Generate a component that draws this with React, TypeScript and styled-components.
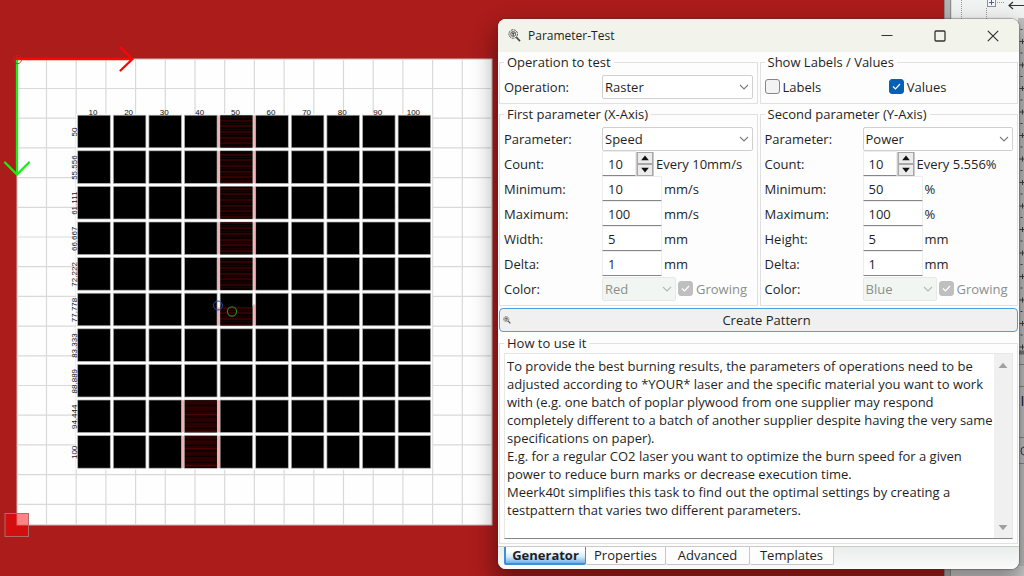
import React from "react";
import styled, { createGlobalStyle, css } from "styled-components";

const GlobalStyle = createGlobalStyle`
  *, *::before, *::after { box-sizing: border-box; }
  body { margin: 0; font-family: "Open Sans", "Noto Sans", sans-serif; font-size: 13px; line-height: 18px; color: #1f1f1f; overflow: hidden; }
  button, input, select, textarea { font: inherit; color: inherit; margin: 0; }
`;

/* ---------- desktop ---------- */

const Desktop = styled.div`
  position: relative;
  display: flex;
  min-height: 100vh;
  overflow: hidden;
  background: #ab1c1b;
`;

const Scene = styled.main`
  flex: 1;
  min-width: 0;
`;

const SceneDrawing = styled.svg`
  display: block;
`;

const Sash = styled.div`
  width: 8px;
  background: linear-gradient(90deg, #8a8a8a 0 1px, #b4b4b4 1px 6px, #8f8f8f 6px 7px, #dcdcdc 7px);
`;

const SidePanel = styled.aside`
  width: 72px;
  background: #f1f2f2;
`;

/* ---------- tool window ---------- */

const ToolWindow = styled.section`
  position: absolute;
  top: 19px;
  left: 498px;
  right: 5px;
  display: flex;
  flex-direction: column;
  background: #fdfdfd;
  border-radius: 8px;
  box-shadow: 0 0 1px 1px rgba(70, 50, 50, 0.35), 0 12px 22px 4px rgba(0, 0, 0, 0.36);
  overflow: clip;
`;

const TitleBar = styled.header`
  display: flex;
  align-items: center;
  height: 33px;
  padding-left: 10px;
  background: #f2f3ea;
`;

const Title = styled.h1`
  flex: 1;
  margin: 0 0 0 7px;
  font-size: 12px;
  font-weight: 400;
`;

const CaptionButton = styled.button`
  display: grid;
  place-items: center;
  width: 53px;
  height: 33px;
  padding: 0;
  border: 0;
  background: none;
`;

const CaptionButtons = styled.div`
  display: flex;
`;

const Columns = styled.div`
  display: grid;
  grid-template-columns: 1fr 1fr;
  padding-top: 1px;
`;

const Group = styled.fieldset<{ $gap?: number; $top?: number }>`
  min-width: 0;
  margin: 0 1px ${(p) => p.$gap ?? 0}px;
  padding: ${(p) => p.$top ?? 3}px 4px 4px;
  border: 1px solid #e0e1e0;
`;

const Legend = styled.legend`
  padding: 0 3px;
  line-height: 18px;
`;

const FieldGrid = styled.div`
  display: grid;
  grid-template-columns: 98px 1fr;
  grid-auto-rows: 25px;
  align-items: center;
`;

const Inline = styled.div`
  display: flex;
  align-items: center;
  gap: 2px;
  height: 25px;
`;

const SelectFrame = styled.span<{ $width?: number; $off?: boolean }>`
  display: grid;
  grid-template-columns: 1fr 18px;
  align-items: center;
  width: ${(p) => (p.$width ? `${p.$width}px` : "100%")};
  svg { grid-area: 1 / 2; justify-self: center; pointer-events: none; }
  select {
    grid-area: 1 / 1 / 2 / 3;
    appearance: none;
    width: 100%;
    height: 24px;
    padding: 0 2px;
    border: 1px solid #cfd0cf;
    border-radius: 2px;
    background: #fff;
    ${(p) =>
      p.$off &&
      css`
        opacity: 1;
        color: #8b8f8c;
        background: #f2f6f3;
        border-color: #e6eae7;
      `}
  }
`;

const TextBox = styled.input<{ $width: number }>`
  width: ${(p) => p.$width}px;
  height: 25px;
  padding: 0 5px;
  border: 1px solid #ebeeec;
  border-bottom-color: #868686;
  border-radius: 1px;
  background: #fff;
`;

const SpinButtons = styled.span`
  display: grid;
  grid-template-rows: 12px 12px;
  width: 18px;
  background: #c9c9c9;
  padding: 0 1px;
`;

const SpinButton = styled.button`
  display: grid;
  place-items: center;
  padding: 0;
  border: 1px solid #a8a8a8;
  background: #ececec;
`;

const Spinner = styled.span`
  display: flex;
  align-items: center;
`;

const CheckLabel = styled.label<{ $off?: boolean }>`
  display: flex;
  align-items: center;
  gap: 3px;
  color: ${(p) => (p.$off ? "#8b8f8c" : "inherit")};
`;

const CheckFrame = styled.span`
  display: grid;
  place-items: center;
  width: 15px;
  height: 15px;
  > * { grid-area: 1 / 1; }
  svg { pointer-events: none; }
  input {
    appearance: none;
    width: 15px;
    height: 15px;
    border: 1px solid #868686;
    border-radius: 3px;
    background: #f3f3f3;
  }
  input:checked { background: #0560b6; border-color: #0560b6; }
  input:disabled { background: #bfbfbf; border-color: #bfbfbf; }
`;

const CheckRow = styled.div`
  display: grid;
  grid-template-columns: 1fr 1fr;
  align-items: center;
  height: 25px;
`;

const CreateButton = styled.button`
  display: grid;
  grid-template-columns: 16px 1fr;
  align-items: center;
  height: 24px;
  margin: 2px 1px;
  padding: 0 3px;
  border: 1px solid #4f9fdd;
  border-radius: 4px;
  background: #f0f0f0;
`;

const HelpFrame = styled.div`
  display: flex;
  height: 186px;
  border: 1px solid #e6e8e6;
  border-bottom-color: #868686;
`;

const HelpText = styled.textarea`
  flex: 1;
  min-width: 0;
  padding: 3px 0 3px 2px;
  border: 0;
  resize: none;
  overflow: hidden;
  white-space: pre;
  line-height: 18px;
  background: #fff;
`;

const ScrollTrack = styled.div`
  display: flex;
  flex-direction: column;
  justify-content: space-between;
  width: 18px;
  padding: 5px 0;
  background: #f0f0f0;
`;

const ScrollButton = styled.button`
  display: grid;
  place-items: center;
  height: 12px;
  padding: 0;
  border: 0;
  background: none;
`;

const TabBar = styled.nav`
  display: flex;
  height: 23px;
  padding: 0 6px 4px;
  border-top: 1px solid #c9c9c9;
  background: linear-gradient(#e9eeeb, #fafbfa);
`;

const Tab = styled.button<{ $width: number; $active?: boolean }>`
  width: ${(p) => p.$width}px;
  padding: 0 0 1px;
  line-height: 16px;
  border: 1px solid #c6c8c7;
  border-top: 0;
  border-left-width: ${(p) => (p.$active ? "2px" : "0")};
  border-radius: 0 0 2px 2px;
  background: #fdfdfd;
  ${(p) =>
    p.$active &&
    css`
      font-weight: 700;
      border-color: #3f8fd6;
      border-bottom-width: 2px;
      background: linear-gradient(#fff 20%, #d9eafa 60%, #6fb1ea);
    `}
`;

/* ---------- drawings ---------- */

const Chevron = ({ color = "#7d7d7d" }: { color?: string }) => (
  <svg width="10" height="6" viewBox="0 0 10 6" fill="none" stroke={color} strokeWidth="1.1">
    <path d="M1 1l4 4 4-4" />
  </svg>
);

const Magnifier = ({ size }: { size: number }) => (
  <svg width={size} height={size} viewBox="0 0 14 14" fill="none" stroke="#4a4a4a">
    <circle cx="5.6" cy="5.4" r="4.6" strokeWidth="1" strokeDasharray="2.4 .7" />
    <circle cx="5.6" cy="5.4" r="2.7" strokeWidth="0.9" />
    <path d="M4 4.400h3.200M5.600 4.400v3.200" strokeWidth="1.300" />
    <path d="M8.900 8.700l4 4.300" strokeWidth="1.800" />
  </svg>
);

const Triangle = ({ up, color = "#111", w = 8 }: { up?: boolean; color?: string; w?: number }) => (
  <svg width={w} height={w / 2 + 2} viewBox="0 0 8 6" fill={color}>
    <path d={up ? "M4 .6l3.800 4.600H.2z" : "M4 5.400L.2.8h7.600z"} />
  </svg>
);

const PITCH = 35.6;
const columnLabels = ["10", "20", "30", "40", "50", "60", "70", "80", "90", "100"];
const rowLabels = ["50", "55.556", "61.111", "66.667", "72.222", "77.778", "83.333", "88.889", "94.444", "100"];
const cells = rowLabels.flatMap((_, r) => columnLabels.map((__, c) => ({ c, r, x: 78 + c * PITCH, y: 115.5 + r * PITCH })));
const burned = cells.filter(({ c, r }) => (c === 4 && r <= 5) || (c === 3 && r >= 8));

const Workbench = () => (
  <SceneDrawing width="498" height="576" viewBox="0 0 498 576" fontFamily='"Liberation Sans", Arial, sans-serif' fontSize="8">
    <defs>
      <pattern id="burn" width="40" height="17" patternUnits="userSpaceOnUse">
        <rect width="40" height="17" fill="#0a0000" />
        <path d="M0 2h40M0 7h40M0 13h40" stroke="#3d0202" strokeWidth="1.500" />
        <path d="M0 4.500h40M0 10.500h40M0 15.500h40" stroke="#1e0000" strokeWidth="1" />
      </pattern>
      <pattern id="deepBurn" width="40" height="17" patternUnits="userSpaceOnUse">
        <rect width="40" height="17" fill="#2c0000" />
        <path d="M0 3.500h40M0 9h40M0 14.500h40" stroke="#0c0000" strokeWidth="1.500" />
        <path d="M0 6.500h40" stroke="#4a0303" strokeWidth="1" />
      </pattern>
    </defs>
    <rect x="17" y="59" width="475" height="466" fill="#fefefe" stroke="#c9b8b8" strokeWidth="1" />
    <g stroke="#d9d9d9" strokeWidth="1.200">
      {Array.from({ length: 15 }, (_, i) => (
        <path key={`v${i}`} d={`M${16.8 + (i + 1) * 29.7} 59.5V524.5`} />
      ))}
      {Array.from({ length: 15 }, (_, i) => (
        <path key={`h${i}`} d={`M17.5 ${58.8 + (i + 1) * 29.7}H491.5`} />
      ))}
    </g>
    <g fill="#fff">
      {cells.map(({ c, r, x, y }) => (
        <rect key={`${c}-${r}`} x={x - 1.8} y={y - 1.8} width="35.600" height="35.600" />
      ))}
    </g>
    <g stroke="#f3b3b6" strokeWidth="2.600">
      {burned.map(({ c, r, x, y }) => (
        <path key={`${c}-${r}`} d={`M${x - 1.8} ${r === 5 ? y + 14 : y}V${y + 32}M${x + 34} ${r === 5 ? y + 11 : y}V${y + 32}`} />
      ))}
    </g>
    <g fill="#000" stroke="#b4b4b4" strokeWidth="0.700">
      {cells.map(({ c, r, x, y }) => (
        <rect key={`${c}-${r}`} x={x - 0.3} y={y - 0.3} width="32.600" height="32.600" />
      ))}
    </g>
    {burned.map(({ c, r, x, y }) => (
      <rect
        key={`${c}-${r}`}
        x={x}
        y={r === 5 ? y + 13 : y}
        width="32"
        height={r === 5 ? 19 : 32}
        fill={c === 3 ? "url(#deepBurn)" : "url(#burn)"}
      />
    ))}
    <g fill="#111" textAnchor="middle">
      {columnLabels.map((t, i) => (
        <text key={t} x={93 + i * PITCH} y="115">{t}</text>
      ))}
      {rowLabels.map((t, i) => (
        <text key={t} transform={`translate(77 ${132 + i * PITCH}) rotate(-90)`}>{t}</text>
      ))}
    </g>
    <g fill="none" strokeLinecap="round">
      <path d="M17 59v115M5 162.500L17 174.500 29 162.500" stroke="#16f016" strokeWidth="2.300" />
      <path d="M17 59h115M120.500 47.500l12 11.500L120.500 70.500" stroke="#fd0505" strokeWidth="2.300" />
      <circle cx="17.500" cy="59.500" r="4.200" stroke="#e01818" strokeWidth="0.800" />
      <circle cx="218" cy="305.500" r="4.500" stroke="#2a48b8" strokeWidth="1" />
      <circle cx="232" cy="311.500" r="4.600" stroke="#1c8a1c" strokeWidth="1.200" />
    </g>
    <rect x="5" y="513.500" width="23.500" height="23" fill="#ff0000" fillOpacity="0.480" stroke="#b06a6a" strokeWidth="1" />
    <rect x="17.500" y="514" width="10.500" height="10.500" fill="#ff8484" />
  </SceneDrawing>
);

const PanelDrawing = () => (
  <svg width="72" height="576" viewBox="0 0 72 576" fill="none">
    <rect x="66" y="18" width="6" height="558" fill="#c2c2c2" />
    <rect y="566" width="72" height="10" fill="#d4d4d4" />
    <path d="M9.500 0v19M34.500 8v11" stroke="#999" strokeDasharray="1 1" />
    <rect x="35.500" y="-2.500" width="8" height="9" fill="#f4f7fc" stroke="#8a8f98" />
    <path d="M37 2.500h5M39.500 0v5" stroke="#3c64b0" />
    <path d="M45 2.500h8" stroke="#999" strokeDasharray="1 1" />
    <path d="M72 5.500H57M61 2l-4 3.500 4 3.500" stroke="#333" strokeWidth="1.200" />
    {Array.from({ length: 14 }, (_, i) => (
      <g key={i} stroke="#444">
        <path d={`M68.500 ${29.500 + i * 23.500}h2M67.500 ${41.500 + i * 23.500}h5M70.500 ${39 + i * 23.500}v5`} />
      </g>
    ))}
    <path d="M66 352.500h6" stroke="#777" strokeWidth="4" />
    <path d="M66 364.500h6M66 386.500h6M66 437.500h6M66 463.500h6" stroke="#8a8a8a" />
    <path d="M70.500 396v10" stroke="#343052" strokeWidth="1.500" />
    <path d="M72 447q-3 0-3 4t3 4" stroke="#343052" />
  </svg>
);

/* ---------- form parts ---------- */

function Check({ label, checked, disabled }: { label: string; checked?: boolean; disabled?: boolean }) {
  return (
    <CheckLabel $off={disabled}>
      <CheckFrame>
        <input type="checkbox" defaultChecked={checked} disabled={disabled} />
        {checked && (
          <svg width="9" height="7" viewBox="0 0 9 7" fill="none" stroke="#fff" strokeWidth="1.200">
            <path d="M1 3.500L3.500 6 8 1" />
          </svg>
        )}
      </CheckFrame>
      {label}
    </CheckLabel>
  );
}

function Choice({ id, value, options, width, disabled }: { id: string; value: string; options: string[]; width?: number; disabled?: boolean }) {
  return (
    <SelectFrame $width={width} $off={disabled}>
      <select id={id} defaultValue={value} disabled={disabled}>
        {options.map((o) => (
          <option key={o}>{o}</option>
        ))}
      </select>
      <Chevron color={disabled ? "#b5b8b6" : undefined} />
    </SelectFrame>
  );
}

interface AxisProps {
  axis: string;
  title: string;
  parameter: string;
  every: string;
  min: string;
  unit: string;
  sizeLabel: string;
  color: string;
}

function AxisGroup({ axis, title, parameter, every, min, unit, sizeLabel, color }: AxisProps) {
  const fields = [
    { key: "min", label: "Minimum:", value: min, unit },
    { key: "max", label: "Maximum:", value: "100", unit },
    { key: "size", label: sizeLabel, value: "5", unit: "mm" },
    { key: "delta", label: "Delta:", value: "1", unit: "mm" },
  ];
  return (
    <Group>
      <Legend>{title}</Legend>
      <FieldGrid>
        <label htmlFor={`${axis}-parameter`}>Parameter:</label>
        <Choice id={`${axis}-parameter`} value={parameter} options={["Speed", "Power"]} />
        <label htmlFor={`${axis}-count`}>Count:</label>
        <Inline>
          <Spinner>
            <TextBox id={`${axis}-count`} $width={34} defaultValue="10" />
            <SpinButtons>
              <SpinButton aria-label="Increase"><Triangle up /></SpinButton>
              <SpinButton aria-label="Decrease"><Triangle /></SpinButton>
            </SpinButtons>
          </Spinner>
          <span>{every}</span>
        </Inline>
        {fields.map((f) => (
          <React.Fragment key={f.key}>
            <label htmlFor={`${axis}-${f.key}`}>{f.label}</label>
            <Inline>
              <TextBox id={`${axis}-${f.key}`} $width={60} defaultValue={f.value} />
              <span>{f.unit}</span>
            </Inline>
          </React.Fragment>
        ))}
        <label htmlFor={`${axis}-color`}>Color:</label>
        <Inline>
          <Choice id={`${axis}-color`} value={color} options={[color]} width={74} disabled />
          <Check label="Growing" checked disabled />
        </Inline>
      </FieldGrid>
    </Group>
  );
}

const helpText = [
  "To provide the best burning results, the parameters of operations need to be",
  "adjusted according to *YOUR* laser and the specific material you want to work",
  "with (e.g. one batch of poplar plywood from one supplier may respond",
  "completely different to a batch of another supplier despite having the very same",
  "specifications on paper).",
  "E.g. for a regular CO2 laser you want to optimize the burn speed for a given",
  "power to reduce burn marks or decrease execution time.",
  "Meerk40t simplifies this task to find out the optimal settings by creating a",
  "testpattern that varies two different parameters.",
].join("\n");

export default function App() {
  return (
    <Desktop>
      <GlobalStyle />
      <Scene>
        <Workbench />
      </Scene>
      <Sash />
      <SidePanel>
        <PanelDrawing />
      </SidePanel>
      <ToolWindow>
        <TitleBar>
          <Magnifier size={13} />
          <Title>Parameter-Test</Title>
          <CaptionButtons>
            <CaptionButton aria-label="Minimize">
              <svg width="12" height="12" viewBox="0 0 12 12" stroke="#333"><path d="M.5 5.500h11" /></svg>
            </CaptionButton>
            <CaptionButton aria-label="Maximize">
              <svg width="12" height="12" viewBox="0 0 12 12" fill="none" stroke="#333" strokeWidth="1.300"><rect x="1" y="1" width="10" height="10" rx="1" /></svg>
            </CaptionButton>
            <CaptionButton aria-label="Close">
              <svg width="12" height="12" viewBox="0 0 12 12" stroke="#333" strokeWidth="1.200"><path d="M.8.8l10.400 10.400M11.200.8L.8 11.200" /></svg>
            </CaptionButton>
          </CaptionButtons>
        </TitleBar>
        <Columns>
          <Group $gap={1}>
            <Legend>Operation to test</Legend>
            <FieldGrid>
              <label htmlFor="operation">Operation:</label>
              <Choice id="operation" value="Raster" options={["Raster", "Engrave", "Cut"]} />
            </FieldGrid>
          </Group>
          <Group $gap={1}>
            <Legend>Show Labels / Values</Legend>
            <CheckRow>
              <Check label="Labels" />
              <Check label="Values" checked />
            </CheckRow>
          </Group>
          <AxisGroup axis="x" title="First parameter (X-Axis)" parameter="Speed" every="Every 10mm/s" min="10" unit="mm/s" sizeLabel="Width:" color="Red" />
          <AxisGroup axis="y" title="Second parameter (Y-Axis)" parameter="Power" every="Every 5.556%" min="50" unit="%" sizeLabel="Height:" color="Blue" />
        </Columns>
        <CreateButton>
          <Magnifier size={8} />
          <span>Create Pattern</span>
        </CreateButton>
        <Group $gap={2} $top={1}>
          <Legend>How to use it</Legend>
          <HelpFrame>
            <HelpText readOnly aria-label="How to use it" value={helpText} />
            <ScrollTrack>
              <ScrollButton aria-label="Scroll up"><Triangle up color="#a0a0a0" w={10} /></ScrollButton>
              <ScrollButton aria-label="Scroll down"><Triangle color="#a0a0a0" w={10} /></ScrollButton>
            </ScrollTrack>
          </HelpFrame>
        </Group>
        <TabBar>
          <Tab $width={82} $active>Generator</Tab>
          <Tab $width={80}>Properties</Tab>
          <Tab $width={84}>Advanced</Tab>
          <Tab $width={84}>Templates</Tab>
        </TabBar>
      </ToolWindow>
    </Desktop>
  );
}
